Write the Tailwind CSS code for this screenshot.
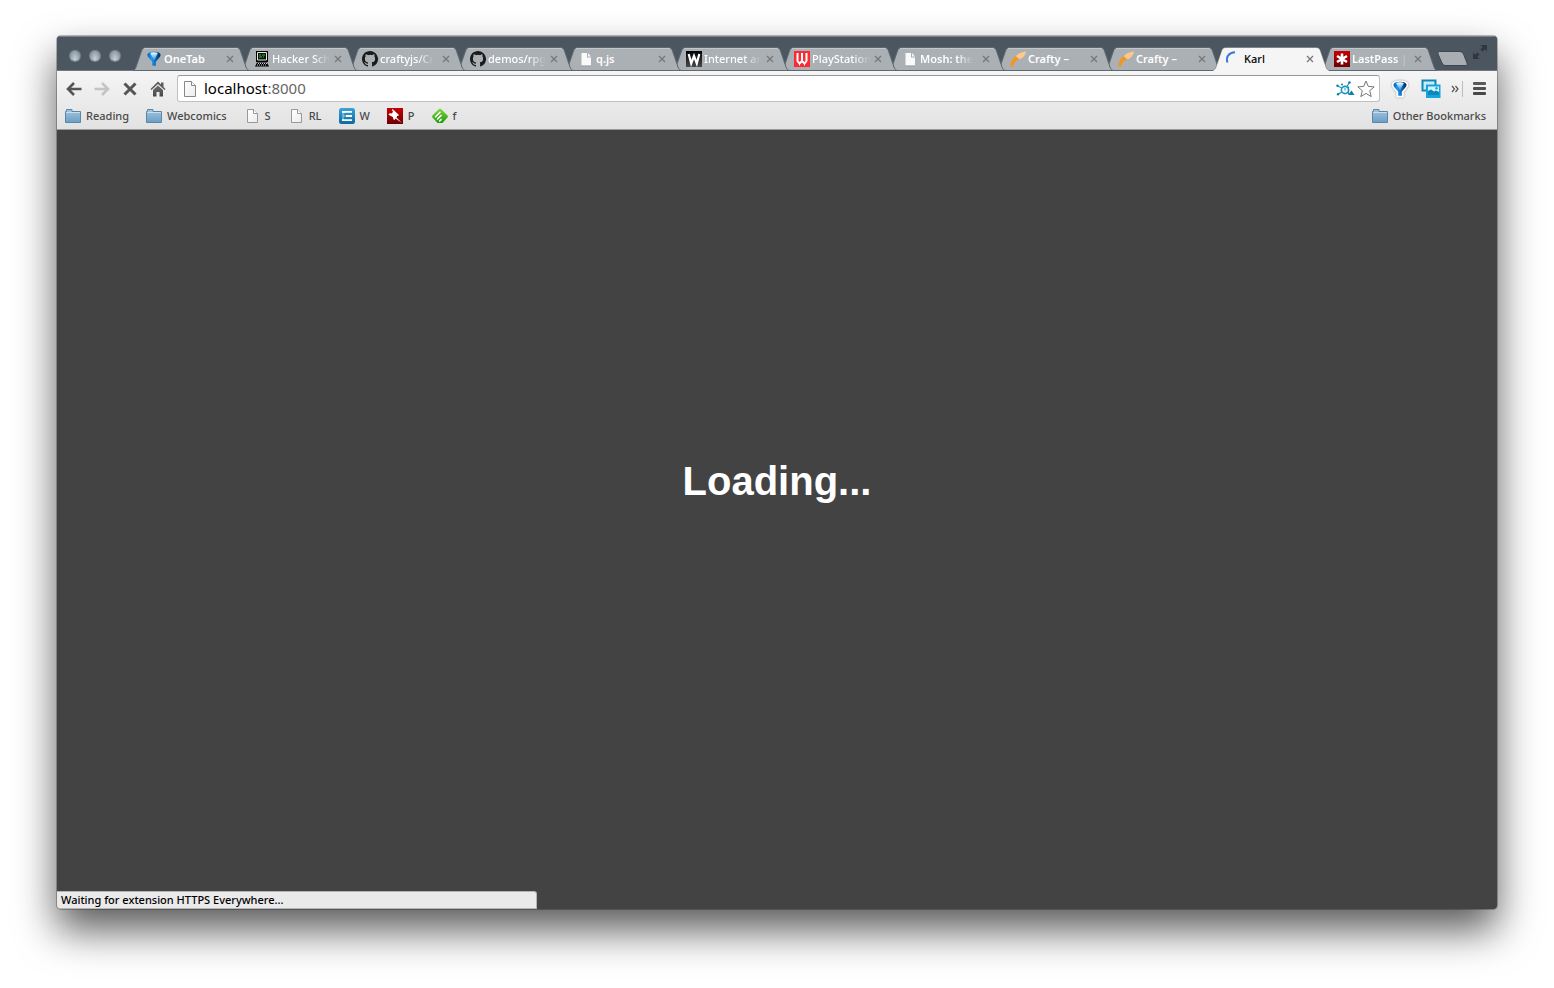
<!DOCTYPE html>
<html lang="en">
<head>
<meta charset="utf-8">
<title>Karl</title>
<script src="https://cdn.jsdelivr.net/npm/@tailwindcss/browser@4"></script>
</head>
<body class="bg-white">
<svg class="absolute size-0" aria-hidden="true">
  <defs>
    <linearGradient id="gFolder" x1="0" y1="0" x2="0" y2="1"><stop offset="0" stop-color="#a4c6de"/><stop offset="1" stop-color="#6a9fc6"/></linearGradient>
    <linearGradient id="gPage" x1="0" y1="0" x2="1" y2="1"><stop offset="0" stop-color="#fff"/><stop offset="1" stop-color="#ececec"/></linearGradient>
    <linearGradient id="gFunnel" x1="0" y1="0" x2="1" y2="0"><stop offset="0" stop-color="#0d5cae"/><stop offset=".3" stop-color="#1b9cf0"/><stop offset=".55" stop-color="#1272cc"/><stop offset="1" stop-color="#06264f"/></linearGradient>
    <linearGradient id="gShine" x1="0" y1="0" x2="0" y2="1"><stop offset="0" stop-color="#fff"/><stop offset="1" stop-color="#8fdcff" stop-opacity=".3"/></linearGradient>
    <linearGradient id="gW" x1="0" y1="0" x2="0" y2="1"><stop offset="0" stop-color="#3ba3d8"/><stop offset="1" stop-color="#0a6a9f"/></linearGradient>
    <linearGradient id="gRed" x1="0" y1="0" x2="0" y2="1"><stop offset="0" stop-color="#c80005"/><stop offset="1" stop-color="#6d0004"/></linearGradient>
    <linearGradient id="gBlk" x1="0" y1="0" x2="0" y2="1"><stop offset="0" stop-color="#000"/><stop offset="1" stop-color="#4a4a4a"/></linearGradient>
    <linearGradient id="gGreen" x1="0" y1="0" x2="0" y2="1"><stop offset="0" stop-color="#7ed636"/><stop offset="1" stop-color="#1f9a12"/></linearGradient>
    <linearGradient id="gIcon" x1="0" y1="0" x2="0" y2="1"><stop offset="0" stop-color="#6e6e6e"/><stop offset="1" stop-color="#474747"/></linearGradient>
  </defs>
  <symbol id="tab" viewBox="0 0 116 24" preserveAspectRatio="none">
    <path d="M0 23.500 C2 22.500 2.500 21.500 3 20 L8.500 4 C9.300 1.500 10.500 .5 13 .5 H103 C105.500 .5 106.700 1.500 107.500 4 L113 20 C113.500 21.500 114 22.500 116 23.500 Z" fill="#abb0b4" stroke="#5f6870"/>
    <path d="M11 2 Q12 1.500 13 1.500 H103 Q104 1.500 105 2" fill="none" stroke="#c3c7ca"/>
  </symbol>
  <symbol id="tabOn" viewBox="0 0 116 24" preserveAspectRatio="none">
    <path d="M-1 24 C2 22.500 2.500 21.500 3 20 L8.500 4 C9.300 1.500 10.500 .5 13 .5 H103 C105.500 .5 106.700 1.500 107.500 4 L113 20 C113.500 21.500 114 22.500 117 24 Z" fill="#f5f5f5"/>
    <path d="M0 23.500 C2 22.500 2.500 21.500 3 20 L8.500 4 C9.300 1.500 10.500 .5 13 .5 H103 C105.500 .5 106.700 1.500 107.500 4 L113 20 C113.500 21.500 114 22.500 116 23.500" fill="none" stroke="#5f6870" stroke-opacity=".55"/>
  </symbol>
  <symbol id="x" viewBox="0 0 8 8"><path d="M1 1 7 7M7 1 1 7" stroke="#75797d" stroke-width="1.300" fill="none"/></symbol>
  <symbol id="funnel" viewBox="0 0 16 16"><path d="M1.500 3.500 C2 1.500 5 .8 8 .8 S14 1.500 14.500 3.500 C14.700 5 13.800 6 12.800 7.200 L9.800 10.800 V14.800 H6.200 V10.800 L3.200 7.200 C2.200 6 1.300 5 1.500 3.500Z" fill="url(#gFunnel)"/><path d="M4.200 1.900 Q8 .8 11.800 1.900 L8.200 9.500Z" fill="url(#gShine)"/></symbol>
  <symbol id="github" viewBox="0 0 16 16"><path fill="#1b1b1b" d="M8 0C3.580 0 0 3.580 0 8c0 3.540 2.290 6.530 5.470 7.590.4.070.55-.17.55-.38v-1.490c-2.230.48-2.700-.94-2.700-.94-.36-.92-.89-1.170-.89-1.170-.73-.5.060-.49.060-.49.8.060 1.230.83 1.230.83.71 1.220 1.870.87 2.330.66.070-.52.280-.87.5-1.070-1.780-.2-3.640-.89-3.640-3.950 0-.87.310-1.590.82-2.150-.08-.2-.36-1.020.08-2.120 0 0 .67-.21 2.200.82a7.600 7.600 0 0 1 4 0c1.530-1.040 2.200-.82 2.200-.82.44 1.100.16 1.920.08 2.120.51.56.82 1.270.82 2.150 0 3.070-1.870 3.750-3.650 3.950.29.25.54.73.54 1.480v2.190c0 .21.15.46.55.38A8 8 0 0 0 8 0Z"/><path fill="#abb0b4" d="M3.800 4.200 Q5 4 6 4.600 Q8 4.200 10 4.600 Q11 4 12.200 4.200 Q12.400 5 12.200 5.900 Q13.400 7.500 12.500 9.400 Q11.600 11 9.600 11.200 Q10.200 11.900 10.100 13 V15.500 H6 V13.700 Q4.300 14 3.600 12.600 L3 12 Q4.300 11.900 4.900 12.900 Q6 13.100 6 12.500 Q6 11.700 6.400 11.200 Q4.300 11 3.500 9.400 Q2.600 7.500 3.800 5.900 Q3.500 5 3.800 4.200Z"/></symbol>
  <symbol id="pageFill" viewBox="0 0 16 16"><path d="M3.500 2 H9 V6.500 H13 V14.500 H3.500Z M10 2 L13 5.500 H10Z" fill="#fafafa"/><path d="M3 15 H13.500" stroke="#8d9296" stroke-opacity=".5"/></symbol>
  <symbol id="page" viewBox="0 0 16 16"><path d="M3.500 1.500 H9.500 L13.500 5.500 V14.500 H3.500Z" fill="url(#gPage)" stroke="#999"/><path d="M9.500 1.500 V5.500 H13.500" fill="#fff" stroke="#999"/></symbol>
  <symbol id="folder" viewBox="0 0 16 16"><path d="M.5 14.500 V3.500 H1.500 V1.500 H7 V3.500 H15.500 V14.500Z" fill="url(#gFolder)" stroke="#5d86a5"/><path d="M1 4.500 H15" stroke="#c8dff0"/></symbol>
  <symbol id="crafty" viewBox="0 0 16 16"><path d="M.5 15.500 C.5 10 3 6.500 6.500 5 L9.500 8 C6 8.500 4.500 11 3.500 14.500 L2 16Z" fill="#f7941d"/><path d="M6 5.500 C7.500 2 12 1.500 16 .2 C15.500 3.500 13.500 7 9.500 8.200Z" fill="#ffc98a"/></symbol>
</svg>

<div class="flex h-screen flex-col px-[57px] pt-9 pb-[79px] font-['Noto_Sans','Liberation_Sans',sans-serif] text-[11px]">
<div class="flex min-h-0 flex-1 flex-col overflow-hidden rounded-[4px] bg-[#434343] shadow-[0_0_0_1px_rgba(0,0,0,0.25),0_21px_40px_rgba(0,0,0,0.65)]">

  <header class="flex h-[35px] shrink-0 items-end border-t border-[#7b848d] border-b border-b-[#77797c] bg-[#4c5661]">
    <div class="flex h-full w-[76px] items-center gap-2 pt-0.5 pl-3">
      <button aria-label="Close window" class="size-3 rounded-full bg-radial-[at_50%_85%] from-[#c3d2dc] to-[#66727d] shadow-[0_1px_0_#7b8691,inset_0_1px_1px_#404952]"></button>
      <button aria-label="Minimize window" class="size-3 rounded-full bg-radial-[at_50%_85%] from-[#c3d2dc] to-[#66727d] shadow-[0_1px_0_#7b8691,inset_0_1px_1px_#404952]"></button>
      <button aria-label="Zoom window" class="size-3 rounded-full bg-radial-[at_50%_85%] from-[#c3d2dc] to-[#66727d] shadow-[0_1px_0_#7b8691,inset_0_1px_1px_#404952]"></button>
    </div>
    <nav aria-label="Tabs" class="isolate -mb-px flex h-6 min-w-0 flex-1 pr-2 font-semibold whitespace-nowrap text-white">
      <div class="relative z-12 -mr-2 flex min-w-0 flex-1 items-center pr-[15px] pl-[13px]">
        <svg class="absolute inset-0 -z-10 size-full"><use href="#tab"/></svg>
        <button class="flex min-w-0 flex-1 items-center gap-0.5"><svg class="size-4 shrink-0"><use href="#funnel"/></svg>OneTab</button>
        <button aria-label="Close tab"><svg class="size-2"><use href="#x"/></svg></button>
      </div>
      <div class="relative z-11 -mr-2 flex min-w-0 flex-1 items-center pr-[15px] pl-[13px]">
        <svg class="absolute inset-0 -z-10 size-full"><use href="#tab"/></svg>
        <button class="flex min-w-0 flex-1 items-center gap-0.5"><svg class="size-4 shrink-0" viewBox="0 0 16 16"><path d="M2 0H14V11H2Z" fill="#000"/><path d="M3.500 1.500H12.500V9H3.500Z" fill="#111" stroke="#e8e8e8"/><path d="M5 4h2M8 4h3M5 6h3M9 6h1" stroke="#35c435"/><path d="M3 11.500H13L15 15.500H1Z" fill="#000"/><path d="M4 12.500h9M3 14h10" stroke="#ccc" stroke-dasharray="1 1"/></svg><span class="font-medium mask-r-from-70%">Hacker Sch</span></button>
        <button aria-label="Close tab"><svg class="size-2"><use href="#x"/></svg></button>
      </div>
      <div class="relative z-10 -mr-2 flex min-w-0 flex-1 items-center pr-[15px] pl-[13px]">
        <svg class="absolute inset-0 -z-10 size-full"><use href="#tab"/></svg>
        <button class="flex min-w-0 flex-1 items-center gap-0.5"><svg class="size-4 shrink-0"><use href="#github"/></svg><span class="font-medium mask-r-from-70%">craftyjs/Cr</span></button>
        <button aria-label="Close tab"><svg class="size-2"><use href="#x"/></svg></button>
      </div>
      <div class="relative z-9 -mr-2 flex min-w-0 flex-1 items-center pr-[15px] pl-[13px]">
        <svg class="absolute inset-0 -z-10 size-full"><use href="#tab"/></svg>
        <button class="flex min-w-0 flex-1 items-center gap-0.5"><svg class="size-4 shrink-0"><use href="#github"/></svg><span class="font-medium mask-r-from-70%">demos/rpg</span></button>
        <button aria-label="Close tab"><svg class="size-2"><use href="#x"/></svg></button>
      </div>
      <div class="relative z-8 -mr-2 flex min-w-0 flex-1 items-center pr-[15px] pl-[13px]">
        <svg class="absolute inset-0 -z-10 size-full"><use href="#tab"/></svg>
        <button class="flex min-w-0 flex-1 items-center gap-0.5"><svg class="size-4 shrink-0"><use href="#pageFill"/></svg>q.js</button>
        <button aria-label="Close tab"><svg class="size-2"><use href="#x"/></svg></button>
      </div>
      <div class="relative z-7 -mr-2 flex min-w-0 flex-1 items-center pr-[15px] pl-[13px]">
        <svg class="absolute inset-0 -z-10 size-full"><use href="#tab"/></svg>
        <button class="flex min-w-0 flex-1 items-center gap-0.5"><svg class="size-4 shrink-0" viewBox="0 0 16 16"><path d="M0 0H16V16H0Z" fill="url(#gBlk)"/><path d="M2.700 3 L5.200 12.500 L8 5 L10.800 12.500 L13.300 3" fill="none" stroke="#fff" stroke-width="2.200"/></svg><span class="font-medium mask-r-from-70%">Internet ar</span></button>
        <button aria-label="Close tab"><svg class="size-2"><use href="#x"/></svg></button>
      </div>
      <div class="relative z-6 -mr-2 flex min-w-0 flex-1 items-center pr-[15px] pl-[13px]">
        <svg class="absolute inset-0 -z-10 size-full"><use href="#tab"/></svg>
        <button class="flex min-w-0 flex-1 items-center gap-0.5"><svg class="size-4 shrink-0" viewBox="0 0 16 16"><path d="M0 0H16V16H0Z" fill="#fb2b33"/><path d="M3.500 2V10L5.500 12.500L8 10L10.500 12.500L12.500 10V2M8 2V10" fill="none" stroke="#fff" stroke-width="2"/><path d="M5.500 12V14.500M10.500 12V14.500" stroke="#fff"/></svg><span class="font-medium mask-r-from-70%">PlayStation</span></button>
        <button aria-label="Close tab"><svg class="size-2"><use href="#x"/></svg></button>
      </div>
      <div class="relative z-5 -mr-2 flex min-w-0 flex-1 items-center pr-[15px] pl-[13px]">
        <svg class="absolute inset-0 -z-10 size-full"><use href="#tab"/></svg>
        <button class="flex min-w-0 flex-1 items-center gap-0.5"><svg class="size-4 shrink-0"><use href="#pageFill"/></svg><span class="mask-r-from-70%">Mosh: the</span></button>
        <button aria-label="Close tab"><svg class="size-2"><use href="#x"/></svg></button>
      </div>
      <div class="relative z-4 -mr-2 flex min-w-0 flex-1 items-center pr-[15px] pl-[13px]">
        <svg class="absolute inset-0 -z-10 size-full"><use href="#tab"/></svg>
        <button class="flex min-w-0 flex-1 items-center gap-0.5"><svg class="size-4 shrink-0"><use href="#crafty"/></svg>Crafty –</button>
        <button aria-label="Close tab"><svg class="size-2"><use href="#x"/></svg></button>
      </div>
      <div class="relative z-3 -mr-2 flex min-w-0 flex-1 items-center pr-[15px] pl-[13px]">
        <svg class="absolute inset-0 -z-10 size-full"><use href="#tab"/></svg>
        <button class="flex min-w-0 flex-1 items-center gap-0.5"><svg class="size-4 shrink-0"><use href="#crafty"/></svg>Crafty –</button>
        <button aria-label="Close tab"><svg class="size-2"><use href="#x"/></svg></button>
      </div>
      <div class="relative z-20 -mr-2 flex min-w-0 flex-1 items-center pr-[15px] pl-[13px] font-medium text-black">
        <svg class="absolute inset-0 -z-10 size-full"><use href="#tabOn"/></svg>
        <button class="flex min-w-0 flex-1 items-center gap-0.5"><svg class="size-4 shrink-0" viewBox="0 0 16 16"><path d="M1.500 11.500 C-.5 6 3 1.500 9 1.300" fill="none" stroke="#3d78d8" stroke-width="2"/></svg>Karl</button>
        <button aria-label="Close tab"><svg class="size-2"><use href="#x"/></svg></button>
      </div>
      <div class="relative z-1 -mr-2 flex min-w-0 flex-1 items-center pr-[15px] pl-[13px]">
        <svg class="absolute inset-0 -z-10 size-full"><use href="#tab"/></svg>
        <button class="flex min-w-0 flex-1 items-center gap-0.5"><svg class="size-4 shrink-0" viewBox="0 0 16 16"><path d="M0 0H16V16H0Z" fill="url(#gRed)"/><path d="M8 2.500V13.500M3 5L13 11M13 5L3 11" stroke="#fff" stroke-width="2.600"/></svg><span class="mask-r-from-80%">LastPass |</span></button>
        <button aria-label="Close tab"><svg class="size-2"><use href="#x"/></svg></button>
      </div>
    </nav>
    <div class="flex h-full w-[60px] shrink-0 items-start">
      <button aria-label="New tab" class="mt-3.5"><svg class="h-4 w-8" viewBox="0 0 32 16"><path d="M2.500 .5H23Q25.500 .5 26.500 3L30 12Q31 14.500 29 14.500H8Q6 14.500 5 12L1 3Q0 .5 2.500 .5Z" fill="#a9aeb3" stroke="#3d464f"/></svg></button>
      <button aria-label="Full screen" class="mt-[7px] ml-[3px]"><svg class="size-4" viewBox="0 0 16 16"><path d="M8.500 1H15V7.500L12.800 5.300L10.500 7.600L8.400 5.500L10.700 3.200ZM7.500 15H1V8.500L3.200 10.700L5.500 8.400L7.600 10.500L5.300 12.800Z" fill="#2f363d"/></svg></button>
    </div>
  </header>

  <section class="flex h-[59px] shrink-0 flex-col border-b border-[#9a9a9a] bg-linear-to-b from-[#f5f5f5] to-[#e2e2e2]">
    <div class="flex h-[34px] shrink-0 items-center pt-px pl-[9px]">
      <div class="flex w-[111px] shrink-0 gap-3">
        <button aria-label="Back"><svg class="size-4" viewBox="0 0 16 16"><path d="M8 2L2 8L8 14M3 8H15.500" fill="none" stroke="#555" stroke-width="2.600"/></svg></button>
        <button aria-label="Forward"><svg class="size-4" viewBox="0 0 16 16"><path d="M.5 8H14M8 2L14 8L8 14" fill="none" stroke="#c4c4c4" stroke-width="2.600"/></svg></button>
        <button aria-label="Stop"><svg class="size-4" viewBox="0 0 16 16"><path d="M2.500 2.500L13.500 13.500M13.500 2.500L2.500 13.500" stroke="#555" stroke-width="3"/></svg></button>
        <button aria-label="Home"><svg class="size-4" viewBox="0 0 16 16"><path d="M8 .5L11 3.500V1.500H13.500V6L15.500 8L14.500 9L8 3L1.500 9L.5 8Z" fill="#5a5a5a"/><path d="M3 9L8 4.500L13 9V15.500H9.500V11H6.500V15.500H3Z" fill="url(#gIcon)"/></svg></button>
      </div>
      <div class="flex h-[27px] min-w-0 flex-1 items-center rounded-[3px] border border-[#c0c0c0] border-t-[#989898] bg-white px-1">
        <svg class="size-4 shrink-0" viewBox="0 0 16 16"><path d="M2.500 .5H9.500L13.500 4.500V15.500H2.500Z" fill="url(#gPage)" stroke="#888"/><path d="M9.500 .5V4.500H13.500" fill="#fff" stroke="#888"/></svg>
        <div class="relative mb-0.5 ml-1.5 min-w-0 flex-1 text-[15px] leading-5">
          <input aria-label="Address" value="localhost:8000" class="block w-full bg-transparent text-transparent outline-none">
          <span aria-hidden="true" class="pointer-events-none absolute inset-0 text-black">localhost<span class="text-[#666]">:8000</span></span>
        </div>
        <button aria-label="Page extension"><svg class="h-4 w-5" viewBox="0 0 20 16"><g fill="none" stroke="#1795c0"><circle cx="10" cy="9" r="3.600" stroke-width="1.600"/><path d="M12 5.500L14.500 1M7 7L2.500 5M6.800 11L3.500 13M13.500 5.500V13" stroke-width="1.200"/><path d="M10 7V9.500"/></g><path d="M13 14L16.500 9.500L19.500 14Z" fill="#0d7fa8"/><circle cx="2.500" cy="4.800" r="1.200" fill="#0d7fa8"/><circle cx="3" cy="13.300" r="1.200" fill="#0d7fa8"/><circle cx="7" cy="3.500" r="1" fill="#0d7fa8"/><circle cx="14.500" cy="1.500" r="1.200" fill="#0d7fa8"/></svg></button>
        <button aria-label="Bookmark this page" class="ml-0.5"><svg class="size-[18px]" viewBox="0 0 18 18"><path d="M9 1L11.300 6.400L17.200 6.900L12.700 10.700L14.200 16.600L9 13.400L3.800 16.600L5.300 10.700L.8 6.900L6.700 6.400Z" fill="#fff" stroke="#777" stroke-linejoin="round"/></svg></button>
      </div>
      <div class="flex w-[117px] shrink-0 items-center pl-[11px]">
        <button aria-label="OneTab"><svg class="size-[18px] drop-shadow-[0_0_1px_#999]" viewBox="0 0 18 18"><path d="M.8 4.500C1 1.500 5 .5 9 .5S17 1.500 17.200 4.500C17.300 7 15.500 8.500 12.700 12V17.500H5.300V12C2.500 8.500 .7 7 .8 4.500Z" fill="#fff"/><use href="#funnel" x="1" y="1" width="16" height="16"/></svg></button>
        <button aria-label="Image extension" class="ml-3"><svg class="size-5" viewBox="0 0 20 20"><path d="M1.500 1.500H14.500V11.500H1.500Z" fill="#c9ecf8" stroke="#1187b5" stroke-width="2"/><path d="M5 5.500H19.500V19H5Z" fill="#13a5dd"/><path d="M7 7.500H18V13H7Z" fill="#d5f2fd"/><path d="M7 16V12L10 10.500L13 12.500L15 11.500L18 13V16Z" fill="#0d86b8"/><circle cx="15.500" cy="9.300" r="1.200" fill="#13a5dd"/></svg></button>
        <button aria-label="More extensions" class="ml-2.5"><svg class="size-2" viewBox="0 0 8 8"><path d="M1 1L3.500 4L1 7M4.500 1L7 4L4.500 7" fill="none" stroke="#555" stroke-width="1.200"/></svg></button>
        <span class="ml-[3px] h-4 w-px bg-[#bcbcbc]"></span>
        <button aria-label="Menu" class="ml-2.5 flex w-[13px] flex-col gap-0.5"><span class="h-[3px] rounded-[1px] bg-[#595959]"></span><span class="h-[3px] rounded-[1px] bg-[#505050]"></span><span class="h-[3px] rounded-[1px] bg-[#484848]"></span></button>
      </div>
    </div>
    <nav aria-label="Bookmarks" class="flex flex-1 items-center gap-[17px] pr-[11px] pb-0.5 pl-2 font-medium text-[#4a4a4a]">
      <a href="#" class="flex items-center gap-[5px]"><svg class="size-4"><use href="#folder"/></svg>Reading</a>
      <a href="#" class="flex items-center gap-[5px]"><svg class="size-4"><use href="#folder"/></svg>Webcomics</a>
      <a href="#" class="flex items-center gap-[5px]"><svg class="size-4"><use href="#page"/></svg>S</a>
      <a href="#" class="flex items-center gap-[5px]"><svg class="size-4"><use href="#page"/></svg>RL</a>
      <a href="#" class="flex items-center gap-[5px]"><svg class="size-4" viewBox="0 0 16 16"><rect width="16" height="16" rx="2.500" fill="url(#gW)"/><path d="M3 4H6M5 3.800H13M7 8H13M5 12.200H13M3 12H5" stroke="#fff" stroke-width="1.800"/><path d="M4 4V12M4 8H7" stroke="#bfe3f5" stroke-width=".8"/></svg>W</a>
      <a href="#" class="flex items-center gap-[5px]"><svg class="size-4" viewBox="0 0 16 16"><path d="M0 0H16V16H0Z" fill="url(#gRed)"/><path d="M5.500 1L12 7L11 8L10.300 7.700L9.500 9.500L15 15L8.500 10.500L7.500 12L6.500 11.500L5.800 9L1.500 6.800L2.500 5.300L5 5.500L6 3.500L4.800 2Z" fill="#fff"/></svg>P</a>
      <a href="#" class="flex items-center gap-[5px]"><svg class="size-4" viewBox="0 0 16 16"><path d="M6.500 1.500Q8 .2 9.500 1.500L15.500 7.500Q16.300 8.500 15.500 9.500L10.500 15H5.500L.5 9.500Q-.3 8.500 .5 7.500Z" fill="url(#gGreen)"/><path d="M3.500 8.800L8 4.300M5.500 11L9 7.500M7.600 13L9 11.600" stroke="#fff" stroke-width="1.600" stroke-linecap="round"/></svg>f</a>
      <a href="#" class="ml-auto flex items-center gap-[5px]"><svg class="size-4"><use href="#folder"/></svg>Other Bookmarks</a>
    </nav>
  </section>

  <main class="flex min-h-0 flex-1 flex-col justify-end">
    <div class="flex flex-1 items-center justify-center pb-[60px]">
      <h1 class="font-['Liberation_Sans',Arial,sans-serif] text-[40px] leading-[48px] font-bold text-white">Loading...</h1>
    </div>
    <div role="status" class="flex h-[18px] w-1/3 items-center rounded-tr-[3px] border border-l-0 border-[#b5b5b5] bg-[#eaeaea] pl-1 font-medium text-black">Waiting for extension HTTPS Everywhere...</div>
  </main>
</div>
</div>
</body>
</html>
